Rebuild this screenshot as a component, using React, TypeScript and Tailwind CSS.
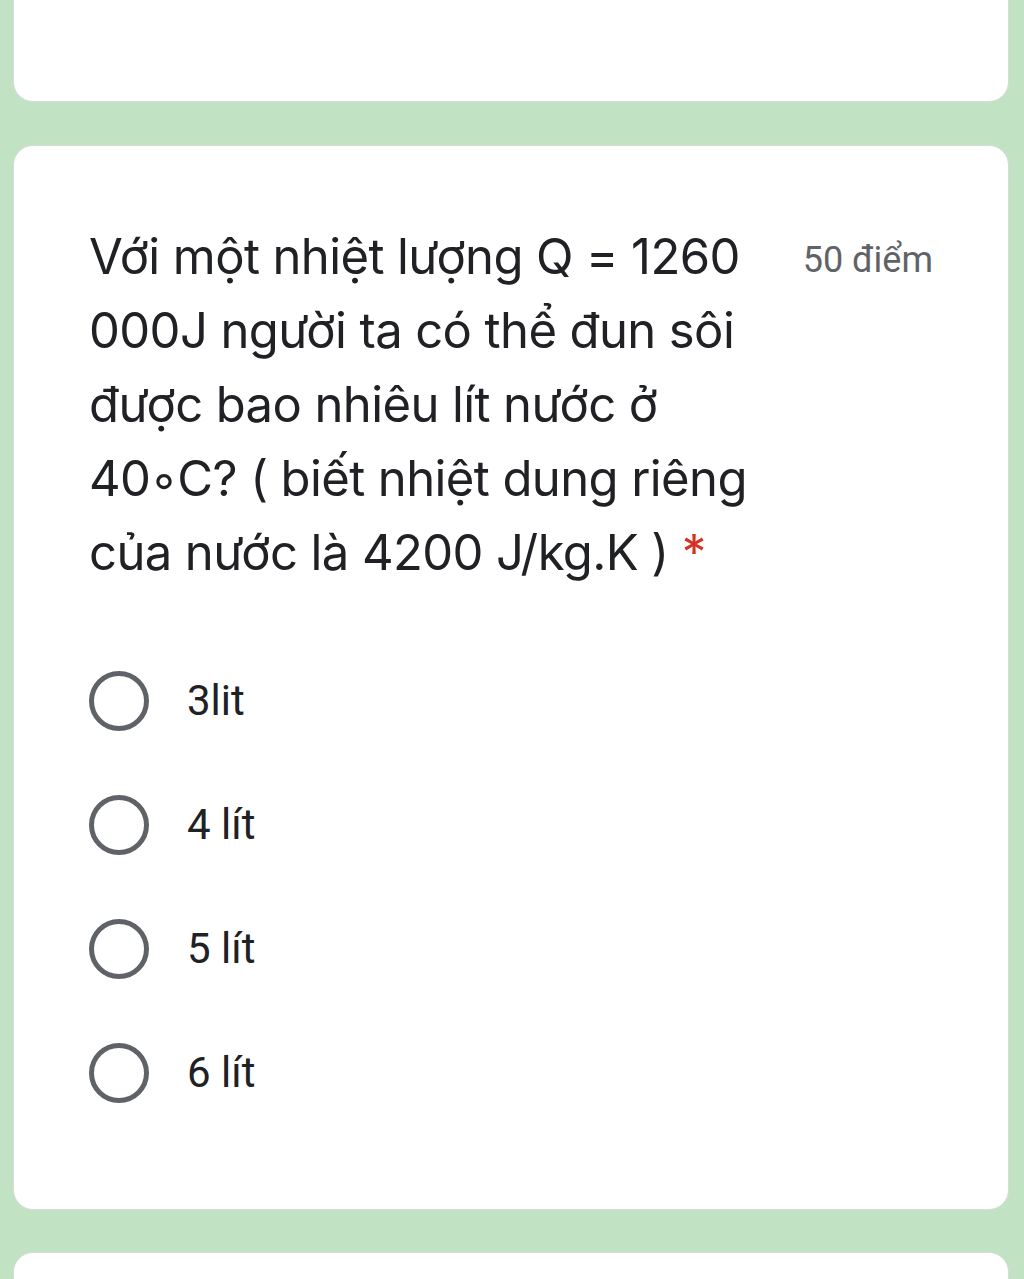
import React from "react";

const options = ["3lit", "4 lít", "5 lít", "6 lít"];

function Radio() {
  return <span className="block h-[60px] w-[60px] shrink-0 rounded-full border-[5px] border-[#5f6368]" aria-hidden="true" />;
}

export default function App() {
  return (
    <div className="min-h-[1279px] overflow-hidden bg-[#c1e3c4] pl-[13px] pr-[15px]">
      <div className="-mt-[40px] h-[142px] rounded-[20px] border border-[#d6dcd6] bg-white" />

      <section className="mt-[43px] rounded-[20px] border border-[#d6dcd6] bg-white px-[75px] pt-[74px] pb-[106px]">
        <div className="flex items-start justify-between">
          <h2 className="w-[690px] text-[49px] leading-[74px] tracking-[-0.6px] text-[#202124] [font-family:Inter,sans-serif]">
            Với một nhiệt lượng Q = 1260
            <br />
            000J người ta có thể đun sôi
            <br />
            được bao nhiêu lít nước ở
            <br />
            40◦C? ( biết nhiệt dung riêng
            <br />
            của nước là 4200 J/kg.K ) <span className="text-[#d93025]">*</span>
          </h2>
          <span className="mt-[18px] text-[36px] leading-[44px] text-[#5f6368] [font-family:Roboto,sans-serif]">50 điểm</span>
        </div>

        <ul className="mt-[81px] flex flex-col gap-[64px]">
          {options.map((opt) => (
            <li key={opt} className="flex items-center gap-[38px]">
              <Radio />
              <span className="text-[42px] leading-[60px] text-[#202124] [font-family:Roboto,sans-serif]">{opt}</span>
            </li>
          ))}
        </ul>
      </section>

      <div className="mt-[42px] h-[80px] rounded-[20px] border border-[#d6dcd6] bg-white" />
    </div>
  );
}
